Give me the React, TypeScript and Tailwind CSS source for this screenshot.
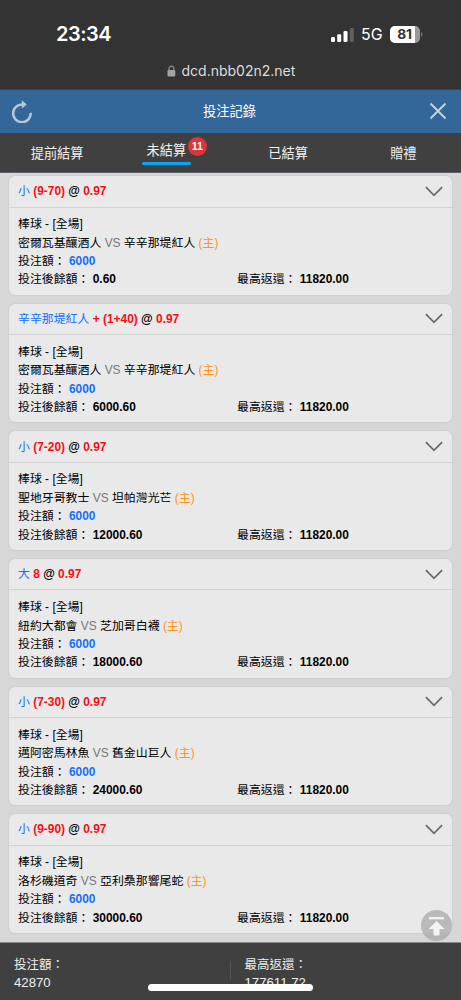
import React from 'react';

interface Bet {
  id: number;
  pick: string;
  line: string;
  away: string;
  home: string;
  balance: string;
}

const bets: Bet[] = [
  { id: 1, pick: '小', line: '(9-70)', away: '密爾瓦基釀酒人', home: '辛辛那堤紅人', balance: '0.60' },
  { id: 2, pick: '辛辛那堤紅人', line: '+ (1+40)', away: '密爾瓦基釀酒人', home: '辛辛那堤紅人', balance: '6000.60' },
  { id: 3, pick: '小', line: '(7-20)', away: '聖地牙哥教士', home: '坦帕灣光芒', balance: '12000.60' },
  { id: 4, pick: '大', line: '8', away: '紐約大都會', home: '芝加哥白襪', balance: '18000.60' },
  { id: 5, pick: '小', line: '(7-30)', away: '邁阿密馬林魚', home: '舊金山巨人', balance: '24000.60' },
  { id: 6, pick: '小', line: '(9-90)', away: '洛杉磯道奇', home: '亞利桑那響尾蛇', balance: '30000.60' },
];

const StatusBar: React.FC = () => (
  <div className="h-[90px] shrink-0 bg-[#333333] border-b border-[#3b4450] font-['Inter',sans-serif] text-white">
    <div className="flex items-center justify-between pt-[22px] pl-[56px] pr-[38px]">
      <span className="text-[20px] leading-[25px] font-semibold tracking-[-0.5px]">23:34</span>
      <div className="flex items-center">
        <svg className="w-6 h-4" viewBox="0 0 24 16" fill="#fff">
          <rect x="0" y="10" width="4" height="5" rx="1.2" />
          <rect x="6.2" y="7.3" width="4" height="7.7" rx="1.2" />
          <rect x="12.5" y="4" width="4" height="11" rx="1.2" />
          <rect x="18.8" y="1" width="4" height="14" rx="1.2" opacity="0.22" />
        </svg>
        <span className="ml-[6px] w-[22px] text-[15.9px] leading-[25px]">5G</span>
        <svg className="ml-[7px] w-[33px] h-[17px]" viewBox="0 0 33 17">
          <rect x="0" y="0" width="30" height="17" rx="5" fill="#999" />
          <path d="M5 0h20v17H5a5 5 0 0 1-5-5V5a5 5 0 0 1 5-5z" fill="#fff" />
          <path d="M31 6q1.6 0.8 1.6 2.5T31 11z" fill="#777" />
          <text x="14.6" y="13.3" textAnchor="middle" fontSize="13.8" fontWeight="700" fill="#333">81</text>
        </svg>
      </div>
    </div>
    <div className="mt-[14px] flex items-center pl-[166.5px] text-[#dddddd]">
      <svg className="w-[9px] h-[12px]" viewBox="0 0 9 12">
        <path d="M2 6V3.5a2.4 2.4 0 0 1 4.8 0V6" fill="none" stroke="#8e8e93" strokeWidth="1.2" />
        <rect x="0.5" y="5" width="7.8" height="6.6" rx="1.3" fill="#a1a1a6" />
      </svg>
      <span className="ml-[6px] text-[14px] leading-5">dcd.nbb02n2.net</span>
    </div>
  </div>
);

const TitleBar: React.FC = () => (
  <div className="h-[43px] shrink-0 flex items-center justify-between bg-[#336799] pl-[11px] pr-[14px] text-white">
    <svg className="w-[22px] h-[24px] -mt-[2px]" viewBox="0 0 22 24">
      <path d="M19.7 13.8A8.8 8.8 0 1 1 11.5 5.6" fill="none" stroke="#b4c8dc" strokeWidth="2.5" />
      <path d="M10.8 1.2l5 4.2-5 4.2z" fill="#b4c8dc" />
    </svg>
    <span className="text-[13.3px] -ml-[3px]">投注記錄</span>
    <svg className="w-[18px] h-[18px] -mt-px" viewBox="0 0 18 18" fill="none" stroke="#c5d5e4" strokeWidth="1.8">
      <path d="M1.5 1.5l15 15M16.5 1.5l-15 15" />
    </svg>
  </div>
);

const Tabs: React.FC = () => (
  <div className="h-[40px] shrink-0 grid grid-cols-4 bg-[#404040] border-b border-[#596067] text-[13.2px] text-[#f0f0f0] text-center">
    <button className="leading-[40px] pt-px -ml-px">提前結算</button>
    <button className="flex justify-center -ml-[13px]">
      <span className="relative flex flex-col items-center">
        <span className="leading-[20px] mt-[8px]">未結算</span>
        <span className="mt-px w-[49px] h-[3px] rounded-full bg-[#08a5f5]" />
        <span className="absolute left-[46px] top-[4px] w-[19px] h-[19px] rounded-full bg-[#d9363b] font-['Liberation_Sans'] text-[10.5px] leading-[19px] font-bold text-white">
          11
        </span>
      </span>
    </button>
    <button className="leading-[40px] pt-px">已結算</button>
    <button className="leading-[40px] pt-px">贈禮</button>
  </div>
);

const BetCard: React.FC<{ bet: Bet }> = ({ bet }) => (
  <div className="h-[118.6px] shrink-0 rounded-[6px] bg-[#e9e9e9] shadow-[0_0_2px_rgba(0,0,0,0.12)] text-[11.92px] text-black">
    <div className="h-[31.5px] flex items-center justify-between border-b border-[#d3d3d3] px-[9px]">
      <div className="leading-[18px] font-bold text-[#f90d12]">
        <span className="font-normal text-[#146eff]">{bet.pick}</span> {bet.line}{' '}
        <span className="text-black">@</span> 0.97
      </div>
      <svg className="w-[18px] h-[11px]" viewBox="0 0 18 11" fill="none" stroke="#6a6a6a" strokeWidth="1.8">
        <path d="M0.9 1.2L9 9.3l8.1-8.1" />
      </svg>
    </div>
    <div className="pt-[7.7px] pl-[9px] leading-[18.4px]">
      <p>棒球 - [全場]</p>
      <p>
        {bet.away} <span className="text-[#777777]">VS</span> {bet.home} <span className="text-[#ff941c]">(主)</span>
      </p>
      <p>
        投注額： <b className="text-[#146eff]">6000</b>
      </p>
      <div className="flex">
        <p className="w-[219px]">
          投注後餘額： <b>{bet.balance}</b>
        </p>
        <p>
          最高返還： <b>11820.00</b>
        </p>
      </div>
    </div>
  </div>
);

const App: React.FC = () => {
  return (
    <div
      lang="zh-TW"
      className="relative w-[461px] h-[1000px] overflow-hidden flex flex-col bg-[#d7d7d7] font-['Liberation_Sans','Noto_Sans_CJK_TC',sans-serif]"
    >
      <StatusBar />
      <TitleBar />
      <Tabs />

      {/* Unsettled bets */}
      <div className="flex-1 min-h-0 overflow-hidden flex flex-col gap-[9.05px] pt-[3px] px-[9px]">
        {bets.map((bet) => (
          <BetCard key={bet.id} bet={bet} />
        ))}
      </div>

      {/* Totals */}
      <div className="h-[58px] shrink-0 flex bg-[#404040] border-t border-[#8a8a8a] pt-[13px] text-[13.2px] leading-[18px] text-[#eeeeee]">
        <div className="w-[230px] pl-[14px]">
          <p className="text-[12.5px]">投注額：</p>
          <p>42870</p>
        </div>
        <div className="mt-[5px] w-px h-[19px] bg-[#555555]" />
        <div className="pl-[13.5px]">
          <p className="text-[12.5px]">最高返還：</p>
          <p>177611.72</p>
        </div>
      </div>

      {/* Back to top */}
      <button className="absolute left-[421px] top-[910px] w-[31px] h-[31px] rounded-full bg-[#a9a9a9]/75 flex items-center justify-center">
        <svg className="w-[17px] h-[20px]" viewBox="0 0 17 20" fill="#f4f4f4">
          <rect x="1" y="1" width="15" height="2.3" />
          <path d="M8.5 5l8 8h-5v6.5h-6V13h-5z" />
        </svg>
      </button>

      {/* Home indicator */}
      <div className="absolute left-[148px] top-[984px] w-[165px] h-[7px] rounded-full bg-white" />
    </div>
  );
};

export default App;
